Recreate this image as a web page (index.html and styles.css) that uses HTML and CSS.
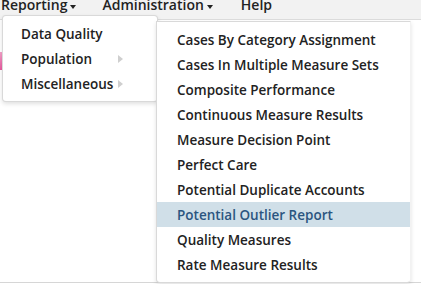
FILE: index.html
```html
<!DOCTYPE html>
<html>
<head>
<meta charset="utf-8">
<link rel="stylesheet" href="styles.css">
</head>
<body>
<div class="page">
  <nav class="navbar">
    <div class="nav-item">Reporting<span class="caret"></span></div>
    <div class="nav-item admin">Administration<span class="caret"></span></div>
    <div class="nav-item help">Help</div>
  </nav>
  <div class="bg-mark"></div>
  <div class="footer-line"></div>

  <ul class="menu main-menu">
    <li>Data Quality</li>
    <li>Population<span class="sub-arrow"></span></li>
    <li>Miscellaneous<span class="sub-arrow"></span></li>
  </ul>

  <ul class="menu sub-menu">
    <li>Cases By Category Assignment</li>
    <li>Cases In Multiple Measure Sets</li>
    <li>Composite Performance</li>
    <li>Continuous Measure Results</li>
    <li>Measure Decision Point</li>
    <li>Perfect Care</li>
    <li>Potential Duplicate Accounts</li>
    <li class="active">Potential Outlier Report</li>
    <li>Quality Measures</li>
    <li>Rate Measure Results</li>
  </ul>
</div>
</body>
</html>
```

FILE: styles.css
```css
html, body {
  margin: 0;
  padding: 0;
  background: #fff;
}
body {
  font-family: "Open Sans", "DejaVu Sans", sans-serif;
  font-weight: 600;
  font-size: 13.5px;
  color: #222;
  width: 421px;
  height: 284px;
  overflow: hidden;
}
.page {
  position: relative;
  width: 421px;
  height: 284px;
}
.navbar {
  display: flex;
  align-items: flex-start;
  height: 19px;
  background: #f2f2f2;
  border-bottom: 1px solid #dcdcdc;
  padding-left: 1px;
  overflow: hidden;
  font-size: 14px;
}
.nav-item {
  display: flex;
  align-items: center;
  line-height: 14px;
  margin-top: -2px;
  color: #222;
  white-space: nowrap;
}
.admin { margin-left: 26px; }
.help { margin-left: 28px; }
.caret {
  display: inline-block;
  width: 0;
  height: 0;
  margin-left: 3px;
  margin-top: 4px;
  border-left: 3.5px solid transparent;
  border-right: 3.5px solid transparent;
  border-top: 4px solid #222;
}
.bg-mark {
  position: absolute;
  left: 0;
  top: 52px;
  width: 2px;
  height: 18px;
  background: linear-gradient(#f4a0c8, #e85aa0);
}
.footer-line {
  position: absolute;
  left: 0;
  right: 0;
  top: 282px;
  height: 1px;
  background: #d6d6d6;
}
.menu {
  position: absolute;
  list-style: none;
  margin: 0;
  padding: 5px 0;
  background: #fff;
  border: 1px solid rgba(0, 0, 0, 0.15);
  border-radius: 0 0 4px 4px;
  box-shadow: 0 2px 4px rgba(0, 0, 0, 0.12);
}
.menu li {
  display: flex;
  align-items: center;
  height: 25px;
  white-space: nowrap;
  position: relative;
}
.main-menu {
  left: 2px;
  top: 15px;
  width: 154px;
  height: 75px;
  border-radius: 4px;
  z-index: 1;
}
.main-menu li {
  padding-left: 18px;
}
.sub-arrow {
  position: absolute;
  left: 115px;
  top: 9px;
  width: 0;
  height: 0;
  border-top: 4px solid transparent;
  border-bottom: 4px solid transparent;
  border-left: 5px solid #cfcfcf;
}
.sub-menu {
  left: 156px;
  top: 21px;
  width: 253px;
  height: 250px;
  z-index: 2;
  border-right-color: rgba(0, 0, 0, 0.05);
}
.sub-menu li {
  padding-left: 20px;
}
.sub-menu li.active {
  background: #d0dfe8;
  color: #2b5580;
}
```
